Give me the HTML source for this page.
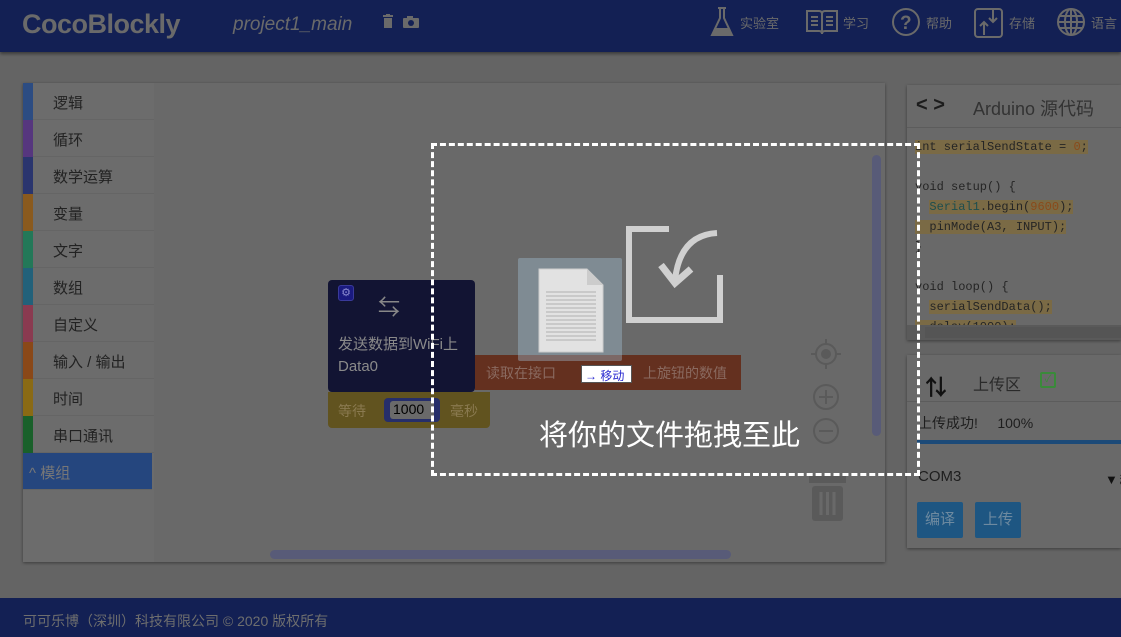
<!DOCTYPE html>
<html><head><meta charset="utf-8"><style>
*{margin:0;padding:0;box-sizing:border-box}
body{width:1121px;height:637px;overflow:hidden;background:#646464;font-family:"Liberation Sans","Noto Sans CJK SC",sans-serif;position:relative}
.hdr{position:absolute;left:0;top:0;width:1121px;height:52px;background:#132054;box-shadow:0 2px 3px rgba(0,0,0,.4)}
.logo{position:absolute;left:22px;top:9px;font-size:27px;font-weight:bold;color:#6a6a6a;letter-spacing:-0.5px}
.proj{position:absolute;left:233px;top:14px;font-size:19px;font-style:italic;color:#6a6a6a}
.nav{position:absolute;top:5px;color:#6a6a6a;font-size:13px;display:flex;align-items:center;gap:4px;white-space:nowrap}
.nav svg{stroke:#6a6a6a;fill:none;stroke-width:2}
.ftr{position:absolute;left:0;top:598px;width:1121px;height:39px;background:#132054;color:#6e6e6e;font-size:14px;padding:13px 0 0 23px}
.ws{position:absolute;left:23px;top:83px;width:862px;height:479px;background:#696969;box-shadow:0 1px 3px rgba(0,0,0,.4)}
.tb{position:absolute;left:23px;top:83px;width:131px;height:479px;background:#6c6c6c}
.cat{height:37px;border-bottom:1px solid #656565;font-size:15px;color:#222;padding:9px 0 0 30px;position:relative}
.cat i{position:absolute;left:0;top:0;width:10px;height:37px}
.sel{background:#25467e;color:#777;padding-left:6px;width:129px}
.panel{position:absolute;background:#696969;box-shadow:0 1px 3px rgba(0,0,0,.4)}
.code{font-family:"Liberation Mono",monospace;font-size:12px;color:#252525;line-height:20px;white-space:pre;position:absolute;left:915px;top:137px}
.hl{background:#7a6a45}
</style></head><body>
<div class="hdr">
<div class="logo">CocoBlockly</div>
<div class="proj">project1_main</div>
<svg style="position:absolute;left:383px;top:14px" width="40" height="16"><rect x="1" y="4" width="8" height="10" fill="#6a6a6a"/><rect x="0" y="1" width="10" height="2" fill="#6a6a6a"/><rect x="3" y="0" width="4" height="2" fill="#6a6a6a"/><rect x="20" y="4" width="16" height="10" rx="1" fill="#6a6a6a"/><rect x="24" y="2" width="6" height="3" fill="#6a6a6a"/><circle cx="28" cy="9" r="3" fill="#132054"/></svg>
<div class="nav" style="left:708px"><svg width="28" height="34"><path d="M10 3h8M12 3v10L4 30h20L16 13V3"/><path d="M7 24h14l2 5H5z" fill="#6a6a6a"/></svg>实验室</div>
<div class="nav" style="left:805px"><svg width="34" height="34"><path d="M2 6h12q3 0 3 3v20q0-3-3-3H2zM32 6H20q-3 0-3 3v20q0-3 3-3h12z"/><path d="M6 12h7M6 16h7M6 20h7M21 12h7M21 16h7M21 20h7"/></svg>学习</div>
<div class="nav" style="left:890px"><svg width="32" height="34"><circle cx="16" cy="17" r="13"/><text x="10" y="24" font-size="19" font-weight="bold" fill="#6a6a6a" stroke="none" font-family="Liberation Sans">?</text></svg>帮助</div>
<div class="nav" style="left:973px"><svg width="32" height="34"><rect x="2" y="4" width="27" height="28" rx="3"/><path d="M11 30V17M7 21l4-4 4 4M20 4v13M16 13l4 4 4-4"/></svg>存储</div>
<div class="nav" style="left:1055px"><svg width="32" height="34"><circle cx="16" cy="17" r="13"/><ellipse cx="16" cy="17" rx="6" ry="13"/><path d="M3 17h26M5 11h22M5 23h22M16 4v26"/></svg>语言</div>
</div>

<div class="ws"></div>
<div class="tb">
<div class="cat"><i style="background:#2c4c82"></i>逻辑</div>
<div class="cat"><i style="background:#56367e"></i>循环</div>
<div class="cat"><i style="background:#2a356e"></i>数学运算</div>
<div class="cat"><i style="background:#8a5a1e"></i>变量</div>
<div class="cat"><i style="background:#237858"></i>文字</div>
<div class="cat"><i style="background:#22617a"></i>数组</div>
<div class="cat"><i style="background:#8a3a50"></i>自定义</div>
<div class="cat"><i style="background:#8a4818"></i>输入 / 输出</div>
<div class="cat"><i style="background:#8a6a14"></i>时间</div>
<div class="cat"><i style="background:#19602a"></i>串口通讯</div>
<div class="cat sel">^ 模组</div>
</div>

<!-- blocks -->
<div style="position:absolute;left:328px;top:280px;width:147px;height:112px;background:#121433;border-radius:4px"></div>
<div style="position:absolute;left:338px;top:285px;width:16px;height:16px;border:1px solid #3a3a9a;border-radius:3px;background:#1a1a80;color:#8a8ad0;font-size:11px;text-align:center;line-height:14px">⚙</div>
<div style="position:absolute;left:378px;top:290px;color:#888;font-size:22px">⇆</div>
<div style="position:absolute;left:338px;top:333px;color:#8a8a8a;font-size:15px">发送数据到WiFi上</div>
<div style="position:absolute;left:338px;top:358px;color:#8a8a8a;font-size:15px">Data0</div>
<div style="position:absolute;left:475px;top:355px;width:266px;height:35px;background:#64301f"></div>
<div style="position:absolute;left:486px;top:363px;color:#8a6a60;font-size:14px">读取在接口</div>
<div style="position:absolute;left:643px;top:363px;color:#8a6a60;font-size:14px">上旋钮的数值</div>
<div style="position:absolute;left:581px;top:365px;width:51px;height:18px;background:#fff;border:1px solid #555;font-size:12px;color:#2a2ad0;padding:1px 0 0 3px;white-space:nowrap">→ 移动</div>
<div style="position:absolute;left:328px;top:392px;width:162px;height:36px;background:#61531f;border-radius:0 0 4px 4px"></div>
<div style="position:absolute;left:338px;top:401px;color:#8a7a50;font-size:14px">等待</div>
<div style="position:absolute;left:384px;top:398px;width:56px;height:24px;background:#262e6a;border-radius:4px"></div>
<div style="position:absolute;left:390px;top:401px;width:44px;height:18px;background:#6a6a6a;border-radius:3px;font-size:14px;color:#000;padding-left:3px">1000</div>
<div style="position:absolute;left:450px;top:401px;color:#8a7a50;font-size:14px">毫秒</div>

<!-- scrollbars/controls -->
<div style="position:absolute;left:270px;top:550px;width:461px;height:9px;border-radius:5px;background:#585b78"></div>
<div style="position:absolute;left:872px;top:155px;width:9px;height:281px;border-radius:5px;background:#585b78"></div>
<svg style="position:absolute;left:808px;top:336px" width="40" height="230" fill="none" stroke="#5a5a5a" stroke-width="2"><circle cx="18" cy="18" r="10"/><circle cx="18" cy="18" r="4" fill="#5a5a5a"/><path d="M18 3v5M18 28v5M3 18h5M28 18h5"/><circle cx="18" cy="61" r="12"/><path d="M11 61h14M18 54v14"/><circle cx="18" cy="95" r="12"/><path d="M11 95h14"/><rect x="1" y="140" width="37" height="7" fill="#5a5a5a" stroke="none"/><rect x="4" y="150" width="31" height="35" rx="3" fill="#5a5a5a" stroke="none"/><path d="M13 156v23M19.5 156v23M26 156v23" stroke="#696969" stroke-width="3"/></svg>

<!-- right panels -->
<div class="panel" style="left:907px;top:85px;width:214px;height:255px"></div>
<div style="position:absolute;left:907px;top:127px;width:214px;height:1px;background:#5c5c5c"></div>
<div style="position:absolute;left:916px;top:94px;font-size:20px;color:#1c1c1c;font-weight:bold">&lt; &gt;</div>
<div style="position:absolute;left:973px;top:95px;font-size:18px;color:#333;white-space:nowrap">Arduino 源代码</div>
<div class="code"><span class="hl">int serialSendState = <span style="color:#8a4a1a">0</span>;</span>

void setup() {
  <span class="hl"><span style="color:#1e4e4e">Serial1</span>.begin(<span style="color:#8a4a1a">9600</span>);</span>
<span class="hl">  pinMode(A3, INPUT);</span>
}

void loop() {
  <span class="hl">serialSendData();</span>
<span class="hl">  delay(1000);</span></div>
<div style="position:absolute;left:907px;top:325px;width:214px;height:15px;background:#5a5a5a"></div>
<div style="position:absolute;left:925px;top:327px;width:196px;height:11px;background:#555"></div>
<div class="panel" style="left:907px;top:355px;width:214px;height:193px"></div>
<div style="position:absolute;left:925px;top:370px;font-size:22px;color:#111;font-weight:bold">⇅</div>
<div style="position:absolute;left:973px;top:371px;font-size:16px;color:#2a2a2a">上传区</div>
<div style="position:absolute;left:1040px;top:372px;width:16px;height:16px;border:2px solid #3a8a3a;border-radius:2px;color:#3a8a3a;font-size:10px;text-align:center;line-height:12px">✓</div>
<div style="position:absolute;left:907px;top:401px;width:214px;height:1px;background:#5c5c5c"></div>
<div style="position:absolute;left:918px;top:413px;font-size:14px;color:#1e1e1e;white-space:nowrap">上传成功!&nbsp;&nbsp;&nbsp;&nbsp;&nbsp;100%</div>
<div style="position:absolute;left:917px;top:440px;width:204px;height:4px;background:#1c4a78"></div>
<div style="position:absolute;left:918px;top:468px;font-size:15px;color:#1e1e1e">COM3</div>
<div style="position:absolute;left:1105px;top:469px;font-size:13px;color:#111;white-space:nowrap">▼ま</div>
<div style="position:absolute;left:917px;top:502px;width:46px;height:36px;background:#1e5682;border-radius:2px;color:#6e8aa0;font-size:15px;text-align:center;line-height:36px">编译</div>
<div style="position:absolute;left:975px;top:502px;width:46px;height:36px;background:#1e5682;border-radius:2px;color:#6e8aa0;font-size:15px;text-align:center;line-height:36px">上传</div>

<!-- drop overlay -->
<div style="position:absolute;left:431px;top:143px;width:489px;height:333px;border:3px dashed #fff"></div>
<div style="position:absolute;left:518px;top:258px;width:104px;height:103px;background:rgba(160,190,210,.4);border-radius:2px"></div>
<svg style="position:absolute;left:538px;top:268px" width="66" height="85"><path d="M1 1h48l16 16v67H1z" fill="#e2e2e2" stroke="#ccc"/><path d="M49 1v16h16" fill="#ccc"/><g stroke="#b0b0b0"><path d="M8 24h50M8 28h50M8 32h50M8 36h50M8 40h50M8 44h50M8 48h50M8 52h50M8 56h50M8 60h50M8 64h50M8 68h50M8 72h50"/></g></svg>
<svg style="position:absolute;left:625px;top:225px" width="100" height="100" fill="none" stroke="#d0d0d0" stroke-width="6"><path d="M44 4H4v91h91V50"/><path d="M92 8Q55 10 50 55"/><path d="M36 40l14 18 16-14" stroke-width="7"/></svg>
<div style="position:absolute;left:539px;top:412px;font-size:29px;color:#fff">将你的文件拖拽至此</div>

<div class="ftr">可可乐博（深圳）科技有限公司 © 2020 版权所有</div>
</body></html>
